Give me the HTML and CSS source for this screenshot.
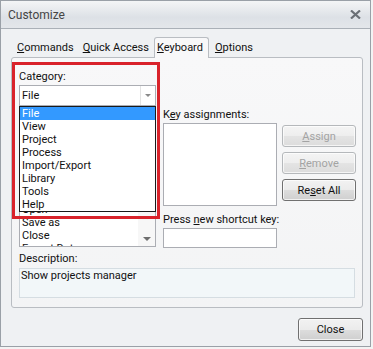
FILE: index.html
```html
<!DOCTYPE html>
<html lang="en">
<head>
    <meta charset="UTF-8">
    <title>Customize</title>
    <link rel="stylesheet" href="styles.css">
</head>
<body>
    <div class="window">
        <div class="titlebar">
            <span class="title">Customize</span>
            <svg class="close-x" width="11" height="9" viewBox="0 0 11 9">
                <path d="M1 0.5 L10 8.5 M10 0.5 L1 8.5" stroke="#6b7076" stroke-width="2.2" fill="none"/>
            </svg>
        </div>

        <div class="content">
            <div class="tabs">
                <div class="tab"><u>C</u>ommands</div>
                <div class="tab"><u>Q</u>uick Access</div>
                <div class="tab active"><u>K</u>eyboard</div>
                <div class="tab"><u>O</u>ptions</div>
            </div>

            <div class="panel">
                <div class="lbl">Cate<u>g</u>ory:</div>
                <div class="combo">
                    <span class="combo-text">File</span>
                    <span class="combo-btn">
                        <svg width="6" height="3" viewBox="0 0 6 3"><path d="M0 0 H6 L3 3 Z" fill="#8a8a8a"/></svg>
                    </span>
                    <ul class="dropdown">
                        <li class="sel">File</li>
                        <li>View</li>
                        <li>Project</li>
                        <li>Process</li>
                        <li>Import/Export</li>
                        <li>Library</li>
                        <li>Tools</li>
                        <li>Help</li>
                    </ul>
                </div>

                <div class="main-row">
                    <div class="col-left">
                        <div class="lbl">Comman<u>d</u>s:</div>
                        <div class="listbox">
                            <ul class="items">
                                <li>Projects Manager</li>
                                <li>New Project</li>
                                <li>Open Project</li>
                                <li>Save Project</li>
                                <li>Close Project</li>
                                <li>New</li>
                                <li>Open</li>
                                <li>Save as</li>
                                <li>Close</li>
                                <li>Export Data</li>
                            </ul>
                            <div class="vscroll">
                                <svg width="8" height="4" viewBox="0 0 8 4"><path d="M0 4 H8 L4 0 Z" fill="#6e6e6e"/></svg>
                                <svg width="8" height="4" viewBox="0 0 8 4"><path d="M0 0 H8 L4 4 Z" fill="#6e6e6e"/></svg>
                            </div>
                        </div>
                    </div>
                    <div class="col-mid">
                        <div class="lbl">K<u>e</u>y assignments:</div>
                        <div class="keylist"></div>
                        <div class="lbl press">Press <u>n</u>ew shortcut key:</div>
                        <input class="keyinput" type="text">
                    </div>
                    <div class="col-btns">
                        <button class="btn" disabled><u>A</u>ssign</button>
                        <button class="btn" disabled><u>R</u>emove</button>
                        <button class="btn">Re<u>s</u>et All</button>
                    </div>
                </div>

                <div class="lbl desc-lbl">Description:</div>
                <div class="desc">Show projects manager</div>
            </div>

            <div class="footer">
                <button class="btn close-btn">Close</button>
            </div>
        </div>

        <div class="callout"></div>
    </div>
</body>
</html>
```

FILE: styles.css
```css
body {
    margin: 0;
    font-family: Roboto, "Liberation Sans", sans-serif;
    font-size: 11px;
    color: #111;
    background: #f3f3f3;
}

ul {
    list-style: none;
    margin: 0;
    padding: 0;
}

.window {
    position: relative;
    width: 371px;
    height: 347px;
    box-sizing: border-box;
    border: 1px solid #9aa0a7;
    background: #eff1f3;
}

.titlebar {
    height: 27px;
    border-bottom: 1px solid #aab0b7;
    background: linear-gradient(#f4f5f6, #dde1e6 60%, #e3e6ea);
    display: flex;
    align-items: center;
    justify-content: space-between;
    padding: 0 9px 0 7px;
}

.title {
    font-size: 12px;
    color: #454545;
}

.content {
    padding: 8px 0 0 10px;
}

/* tabs */
.tabs {
    display: flex;
    height: 20px;
    align-items: stretch;
    position: relative;
    z-index: 1;
}

.tab {
    padding: 3px 4px 0 5px;
    line-height: 15px;
    white-space: nowrap;
}

.tab:first-child {
    padding-left: 6px;
}

.tab.active {
    border: 1px solid #b9bdc2;
    border-bottom: none;
    border-radius: 3px 3px 0 0;
    background: #f8f8f9;
    height: 21px;
    box-sizing: border-box;
    padding: 2px 5px 0 2px;
    margin: 0 1px 0 1px;
}

.panel {
    width: 352px;
    box-sizing: border-box;
    border: 1px solid #b9bdc2;
    border-radius: 3px;
    background: linear-gradient(#f8f8f9, #f3f4f5);
    padding: 11px 0 9px 7px;
}

.lbl {
    line-height: 15px;
    height: 15px;
    white-space: nowrap;
}

/* category combo */
.combo {
    position: relative;
    width: 137px;
    height: 21px;
    box-sizing: border-box;
    margin-top: 1px;
    border: 1px solid #abadb3;
    background: #fff;
    display: flex;
    align-items: center;
}

.combo-text {
    flex: 1;
    padding-left: 2px;
}

.combo-btn {
    width: 14px;
    height: 19px;
    border-left: 1px solid #e3e3e3;
    display: flex;
    align-items: center;
    justify-content: center;
}

.dropdown {
    position: absolute;
    top: 20px;
    left: -1px;
    width: 137px;
    box-sizing: border-box;
    border: 1px solid #1a1a1a;
    background: #fff;
    z-index: 5;
}

.dropdown li {
    height: 13px;
    line-height: 13px;
    padding-left: 2px;
}

.dropdown li.sel {
    background: #3399ff;
    color: #fff;
}

/* commands / keys */
.main-row {
    display: flex;
    margin-top: 1px;
}

.col-left {
    width: 137px;
}

.col-left .lbl,
.col-mid > .lbl:first-child {
    margin-bottom: 1px;
}

.listbox {
    height: 124px;
    box-sizing: border-box;
    border: 1px solid #abadb3;
    background: #fff;
    display: flex;
    overflow: hidden;
}

.items {
    flex: 1;
    padding: 1px 0 0 2px;
}

.items li {
    height: 13px;
    line-height: 13px;
    white-space: nowrap;
}

.vscroll {
    width: 17px;
    background: #f7f7f7;
    display: flex;
    flex-direction: column;
    justify-content: space-between;
    align-items: center;
    padding: 6px 0 5px 0;
}

.col-mid {
    width: 114px;
    margin-left: 7px;
}

.keylist {
    height: 83px;
    box-sizing: border-box;
    border: 1px solid #abadb3;
    background: #fff;
}

.press {
    margin-top: 6px;
    margin-bottom: 1px;
}

.keyinput {
    display: block;
    width: 114px;
    height: 20px;
    box-sizing: border-box;
    margin: 0;
    border: 1px solid #abadb3;
    background: #fff;
}

.col-btns {
    width: 74px;
    margin-left: 5px;
    padding-top: 18px;
    display: flex;
    flex-direction: column;
    gap: 5px;
}

.btn {
    height: 22px;
    box-sizing: border-box;
    padding: 0;
    font-family: inherit;
    font-size: 11px;
    color: #111;
    border: 1px solid #707070;
    border-radius: 3px;
    background: linear-gradient(#f2f2f2, #ebebeb 50%, #dddddd 51%, #cfcfcf);
    box-shadow: inset 0 0 0 1px rgba(255, 255, 255, 0.7);
}

.btn:disabled {
    color: #a3a3a3;
    border-color: #b5b8bb;
    background: linear-gradient(#f4f4f4, #eeeeee 50%, #e4e4e4 51%, #dcdcdc);
}

.desc-lbl {
    margin-top: 3px;
}

.desc {
    width: 336px;
    height: 30px;
    box-sizing: border-box;
    margin-top: 2px;
    border: 1px solid #d5dde2;
    background: #f2f7f9;
    padding: 0 1px;
    line-height: 14px;
}

.footer {
    width: 352px;
    display: flex;
    justify-content: flex-end;
    margin-top: 10px;
}

.close-btn {
    width: 65px;
    height: 23px;
}

/* red highlight drawn over the screenshot */
.callout {
    position: absolute;
    left: 11px;
    top: 61px;
    width: 148px;
    height: 157px;
    box-sizing: border-box;
    border: 3px solid #d9232b;
    z-index: 10;
}
```
